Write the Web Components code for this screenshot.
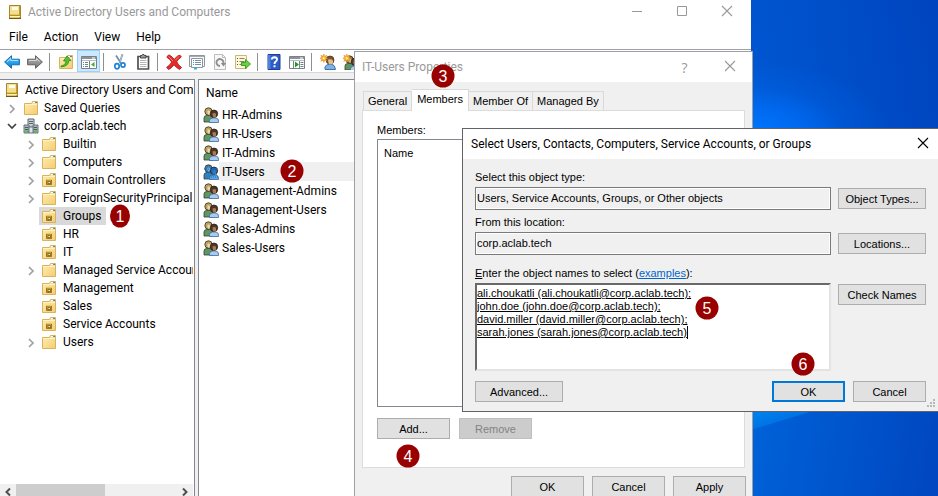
<!DOCTYPE html>
<html lang="en">
<head>
<meta charset="utf-8">
<title>Active Directory Users and Computers</title>
<style>
  html, body { margin: 0; height: 100%; overflow: hidden; }
  body { --ui: Roboto, "Open Sans", sans-serif; font-family: var(--ui); font-size: 12px; color: #000; }
</style>
</head>
<body>
<desk-top></desk-top>

<script>
const define = (name, html, setup) => customElements.define(name, class extends HTMLElement {
  constructor() {
    super();
    const t = document.createElement('template');
    t.innerHTML = html;
    this.attachShadow({ mode: 'open' }).append(t.content.cloneNode(true));
  }
  connectedCallback() { if (setup) setup(this, this.shadowRoot); }
});

/* ---------- icons ---------- */
const folder = `<path d="M1.500 3.500H8.500L9.500 1.500H14.500V14.500H1.500Z" fill="url(#f)" stroke="#d9b25c"/>
  <path d="M10 2.500h4" stroke="#fff"/><path d="M12 2.500h2" stroke="#3c8fd8"/><path d="M2 4.500h12" stroke="#fff3c4"/>`;
const grad = `<defs><linearGradient id="f" x1="0" y1="0" x2="1" y2="1"><stop offset="0" stop-color="#ffedb0"/><stop offset="1" stop-color="#f3cd72"/></linearGradient>
  <linearGradient id="b" x1="0" y1="0" x2="0" y2="1"><stop offset="0" stop-color="#7fd4fb"/><stop offset=".5" stop-color="#2ba4ec"/><stop offset="1" stop-color="#1273c4"/></linearGradient>
  <linearGradient id="g" x1="0" y1="0" x2="0" y2="1"><stop offset="0" stop-color="#b9b9b9"/><stop offset="1" stop-color="#747474"/></linearGradient></defs>`;
const people = (a, b, c) => `<path d="M1 15V11Q1 8.500 4 8.500H7Q10 9 10 12V15Z" fill="${c[0]}" stroke="#33402f" stroke-width=".8"/>
  <circle cx="5.500" cy="4.500" r="3.700" fill="${a}" stroke="#3a2e1e" stroke-width=".8"/><path d="M4.500 3.500Q6.500 3 7.500 4.500V7Q6 8.500 4.500 7Z" fill="${c[2]}"/>
  <path d="M6.500 15.500V13.500Q7 11 9.500 11H13Q15.500 11.500 15.500 14V15.500Z" fill="${c[1]}" stroke="#3b6aa0" stroke-width=".8"/>
  <circle cx="11" cy="6.700" r="3.700" fill="${b}" stroke="#2c211a" stroke-width=".8"/><path d="M9.500 6.500Q11.500 5.500 13 6.800V9.500Q11.500 11.300 9.800 9.500Z" fill="${c[3]}"/>`;
const star = `<path d="M4.500 0 5.400 2.600 8 1.500 6.900 4 9.500 5 6.900 6 8 8.500 5.400 7.500 4.500 10 3.600 7.500 1 8.500 2.100 6-.5 5 2.100 4 1 1.500 3.600 2.600Z" fill="#f9b52e" stroke="#d97b13" stroke-width=".5"/><circle cx="4.500" cy="5" r="1.300" fill="#fff3b0"/>`;
const ICONS = {
  book: `<path d="M2.500 1.500H13.500V14.500H2.500Z" fill="#e6c85c" stroke="#a8852a"/><path d="M3 2H12V10H3Z" fill="#f3df8c"/><path d="M5 3H11V6H5Z" fill="#fffdf0"/><path d="M12.500 2V14" stroke="#c09b35"/><path d="M3 11.500H13" stroke="#b7902c"/><path d="M3 12.500H13" stroke="#fff4bd"/><path d="M2 14.500H14" stroke="#6e5615"/>`,
  folder,
  ou: folder + `<path d="M5.500 7.500H10.500V12.500H5.500Z" fill="#c59a34" stroke="#9a7620"/><path d="M7 9.500H9.500V11.500H7Z" fill="#fff0ab" stroke="#6c5012" stroke-width=".7"/><path d="M5 7.500H11" stroke="#e6c668"/>`,
  domain: `<path d="M5 1H11V9H5Z" fill="#c8d0d4" stroke="#5a666c"/><path d="M6 3.500H10M6 5.500H10" stroke="#55636b"/><path d="M1 7H6V15H1Z" fill="#aab4b8" stroke="#68757b"/><path d="M10 7H15V15H10Z" fill="#aab4b8" stroke="#68757b"/><path d="M2 9.500H5M11 9.500H14M2 11.500H5M11 11.500H14" stroke="#4d5960"/><path d="M6 9H10V15H6Z" fill="#dfe5e8" stroke="#68757b"/><path d="M2 12.500H5V14.500H2ZM11 12.500H14V14.500H11Z" fill="#4fc546"/>`,
  group: people('#b9a25c', '#4c3426', ['#5e9664', '#a9cbee', '#f0d6a8', '#a97a54']),
  groupsel: `<g>${people('#4d7fae', '#22629f', ['#3a86c4', '#5fa4e2', '#83add3', '#3d7fb8'])}</g><path d="M2 3H9M1 5H14M2 7H14M3 9H13M1 11H14M2 13H15" stroke="#0a70c8" stroke-dasharray="1 1"/>`,
  back: `<path d="M.6 8 7.500 1.700V5.200H15.400V10.800H7.500V14.300Z" fill="url(#b)" stroke="#1a6db2"/><path d="M3 7.800 6.800 4.500V6.500H14" fill="none" stroke="#a5e2ff"/>`,
  forward: `<path d="M15.400 8 8.500 1.700V5.200H.6V10.800H8.500V14.300Z" fill="url(#g)" stroke="#616161"/><path d="M2 6.500H9.500V4.500L12.500 7.500" fill="none" stroke="#d5d5d5"/>`,
  up: `<g>${folder}</g><path d="M3 12Q8 11 8 7H5.500L9 2 13 6.500 10.700 6.800Q10.500 12.500 3 13Z" fill="#54c32d" stroke="#2d8b18" stroke-width=".8"/>`,
  console: `<path d="M.5 2.500H15.500V14.500H.5Z" fill="#fff" stroke="#7b7f86"/><path d="M1 3H15V5H1Z" fill="#8d939b"/><path d="M11 4H14" stroke="#fff"/><path d="M1 6.500H15" stroke="#b9bdc2"/><path d="M8.500 7V14" stroke="#7b7f86"/><path d="M2 8.500H7M2 10.500H7M2 12.500H7" stroke="#6e7f96" stroke-dasharray="1 1 3"/><path d="M13.500 8V13L10 10.500Z" fill="#35b32c"/>`,
  consoleplay: `<path d="M.5 2.500H15.500V14.500H.5Z" fill="#fff" stroke="#7b7f86"/><path d="M1 3H15V5H1Z" fill="#8d939b"/><path d="M11 4H14" stroke="#fff"/><path d="M1 6.500H15" stroke="#b9bdc2"/><path d="M4.500 7V14M10.500 7V14" stroke="#7b7f86"/><path d="M6 7.500V13.500L10 10.500Z" fill="#1d9c25"/><path d="M11.500 8.500H14.500M11.500 10.500H14.500M11.500 12.500H14.500" stroke="#6e7f96"/>`,
  cut: `<path d="M10.500 0 7.700 9M4 1.500 9.500 10" stroke="#7890a6" stroke-width="1.800"/><path d="M10.500 0 8 8" stroke="#c9d9e8" stroke-width=".7"/><ellipse cx="5" cy="12.300" rx="2.200" ry="2.600" fill="none" stroke="#1d84d8" stroke-width="1.700"/><ellipse cx="11" cy="11" rx="2" ry="2.200" fill="none" stroke="#1d84d8" stroke-width="1.700"/>`,
  clip: `<path d="M3 2.500H13.500V15H3Z" fill="#fff" stroke="#505050" stroke-width="1.700"/><path d="M5.500 1.500H7L7.500.5H9L9.500 1.500H11V4H5.500Z" fill="#9c9c9c" stroke="#454545"/><path d="M5 6.500H11.500M5 8.500H11.500M5 10.500H11.500M5 12.500H11.500" stroke="#b4b4b4"/>`,
  del: `<path d="M2.500 1Q4 .5 8.200 5.300 12 1 14 1.200L15.300 3Q12 5 10.700 7.800 12 11 15.500 13.500L13.500 15.500Q10 13.500 8 10.700 5.500 14.500 2.500 15.500L.7 13.300Q4.500 11 5.700 8 4 5 .8 3.200Z" fill="#e02b2b" stroke="#c32020"/><path d="M2.500 2.500 7 7M13 2.500 9.500 6" stroke="#f58a80"/>`,
  props: `<path d="M.5 1.500H15.500V12.500H.5Z" fill="#f8f9fa" stroke="#8f959c"/><path d="M1 2.500H15" stroke="#a5abb2"/><path d="M2.500 4.500H13.500V13.500H2.500Z" fill="#fff" stroke="#8f959c"/><path d="M6 6.500H12M6 8.500H12M6 10.500H12" stroke="#7c8da1"/><path d="M4 6.500H5M4 8.500H5M4 10.500H5" stroke="#1fa5e6"/><path d="M5 14.500H8" stroke="#25b4f3" stroke-width="2"/>`,
  refresh: `<path d="M2.500.5H10.500L13.500 3.500V15.500H2.500Z" fill="#f7f7f7" stroke="#bdbdbd"/><path d="M10.500.5V3.500H13.500" fill="none" stroke="#bdbdbd"/><path d="M8 12A3.500 3.500 0 1 1 11.300 9.500" fill="none" stroke="#8e8e8e" stroke-width="1.900"/><path d="M8.700 9H14L11.500 12.500Z" fill="#8e8e8e"/>`,
  exportlist: `<path d="M.5 1.500H11.500V14.500H.5Z" fill="#fff8d8" stroke="#c9b777"/><path d="M2 4.500H3M2 7.500H3M2 10.500H3" stroke="#55503d"/><path d="M4.500 4.500H9.500M4.500 7.500H9.500M4.500 10.500H8.500" stroke="#8c8468"/><path d="M6.500 8.500H10.500V5.500L15.500 10 10.500 14.500V11.500H6.500Z" fill="#6fd03d" stroke="#3e9c22"/>`,
  help: `<path d="M2 .5H14V15.500H2Z" fill="#2c5cc4" stroke="#1d3f95"/><path d="M2 1H4.500V15H2Z" fill="#4d80e4"/><path d="M5.800 5.500Q6 3.300 8.500 3.300 11 3.400 11 5.500 11 6.700 9.500 7.700 8.500 8.500 8.500 10" fill="none" stroke="#fff" stroke-width="1.900"/><path d="M7.500 11.300H9.500V13.200H7.500Z" fill="#fff"/>`,
  newuser: `<path d="M5 15.500V13Q6 10.500 9 10.300H12Q15 11 15.500 15.500Z" fill="#7fb2e4" stroke="#3d74ae"/><circle cx="10" cy="6" r="4" fill="#7a532f" stroke="#49311c" stroke-width=".7"/><path d="M8 5.500Q11 4.500 13 6.500V9Q11 11.500 8.500 9.500Z" fill="#e5bd8b"/><g transform="scale(.85)">${star}</g>`,
  newgroup: `<g transform="translate(1 1)">${people('#8a7a45', '#5c3a24', ['#5e9664', '#a9cbee', '#d8b98a', '#c99a6c'])}</g><g transform="scale(.85)">${star}</g>`,
  right: `<path d="M6 5 10 9 6 13" fill="none" stroke="#a0a0a0" stroke-width="1.700"/>`,
  down: `<path d="M4 6 8 10 12 6" fill="none" stroke="#404040" stroke-width="1.700"/>`,
  sleft: `<path d="M10 4.500 6.500 8 10 11.500" fill="none" stroke="#505050" stroke-width="2"/>`,
  sright: `<path d="M6 4.500 9.500 8 6 11.500" fill="none" stroke="#505050" stroke-width="2"/>`,
  min: `<path d="M3 7.500H13" stroke="currentColor"/>`,
  max: `<path d="M3.500 2.500H12.500V11.500H3.500Z" fill="none" stroke="currentColor"/>`,
  close: `<path d="M3 2 13 12M13 2 3 12" stroke="currentColor" stroke-width="1.100"/>`,
  grip: `<path d="M12 4h2v2h-2zM9 7h2v2H9zM12 7h2v2h-2zM6 10h2v2H6zM9 10h2v2H9zM12 10h2v2h-2z" fill="#b8b8b8"/>`
};
define('ad-icon', `<style>:host{display:block;flex:none;width:16px;height:16px}svg{display:block}</style>`, (h, r) => {
  const s = document.createElement('div');
  s.innerHTML = `<svg width="16" height="16" viewBox="0 0 16 16" fill="none" aria-hidden="true">${grad}${ICONS[h.getAttribute('name')]}</svg>`;
  r.append(s);
});

/* ---------- step badge ---------- */
define('step-badge', `<style>
  :host{display:flex;position:absolute;z-index:9;align-items:center;justify-content:center;width:23px;height:23px;border-radius:50%;background:#900;color:#fff;font:16px "Liberation Sans",sans-serif;transform:translate(-50%,-50%)}
  :host([small]){width:20px}
</style><slot></slot>`);

/* ---------- push button ---------- */
define('push-button', `<style>
  :host{display:block;width:73px}
  :host([wide]){width:88px}
  button{display:block;width:100%;height:21px;padding:0;border:1px solid #adadad;background:#e1e1e1;color:#000;font:inherit;white-space:nowrap}
  :host([primary]) button{border:2px solid #0078d7}
  button:disabled{background:#ccc;border-color:#bfbfbf;color:#838383}
</style><button type="button"><slot></slot></button>`, (h, r) => {
  r.querySelector('button').disabled = h.hasAttribute('disabled');
});

/* ---------- title bar ---------- */
define('title-bar', `<style>
  :host{display:flex;align-items:center;background:#fff;color:#999;height:30px;white-space:nowrap}
  .t{flex:1;display:flex;align-items:center;gap:5px}
  .c{display:flex}
  button{display:grid;place-items:center;width:45px;height:24px;padding:0;border:0;background:none;color:inherit;font:14px "Open Sans",sans-serif}
</style><div class="t"><slot></slot></div><div class="c"></div>`, (h, r) => {
  r.querySelector('.c').innerHTML = h.getAttribute('controls').split(' ').map(n =>
    `<button type="button" aria-label="${n}">${n === 'help' ? '?' : `<ad-icon name="${n}"></ad-icon>`}</button>`).join('');
});

/* ---------- tool bar ---------- */
define('tool-bar', `<style>
  :host{display:flex;height:22px;background:#fff;border-top:1px solid #a0a0a8;border-bottom:1px solid #d8d8d8}
  button{display:grid;place-items:center;flex:none;width:23px;height:22px;padding:2px 0 0;border:0;background:none}
  button.on{background:#cce8ff;box-shadow:inset 0 0 0 1px #99d1ff}
  i{flex:none;width:1px;margin:3px 4px 1px 3px;background:#8f8f8f}
</style>`, (h, r) => {
  const items = ['back', 'forward', '', 'up', 'console', '', 'cut', 'clip', '', 'del', 'props', 'refresh', 'exportlist', '', 'help', 'consoleplay', '', 'newuser', 'newgroup'];
  const d = document.createElement('template');
  d.innerHTML = items.map(n => n ? `<button type="button" aria-label="${n}" class="${n === 'console' ? 'on' : ''}"><ad-icon name="${n}"></ad-icon></button>` : '<i></i>').join('');
  r.append(d.content);
});

/* ---------- tree ---------- */
define('tree-item', `<style>
  :host{display:flex;align-items:center;height:18px;white-space:nowrap}
  .a{flex:none;width:16px;height:16px}
  .n{display:flex;align-items:center;height:18px;padding:0 4px 0 1px;gap:5px}
  :host([level="1"]){padding-left:4px}
  :host([level="2"]){padding-left:23px}
  :host([level="0"]) .a{display:none}
  :host([level="0"]) .n{padding-left:4px}
  :host([level="1"]) .n{padding-left:3px}
  :host([level="2"]) .n{padding-left:2px;gap:6px}
  :host([selected]) .n{background:#d9d9d9}
</style><div class="a"></div><div class="n"><slot></slot></div>`, (h, r) => {
  const st = h.getAttribute('arrow');
  if (st) r.querySelector('.a').innerHTML = `<ad-icon name="${st}"></ad-icon>`;
  r.querySelector('.n').insertAdjacentHTML('afterbegin', `<ad-icon name="${h.getAttribute('icon')}"></ad-icon>`);
});
define('scroll-bar', `<style>
  :host{display:flex;height:12px;overflow:hidden;margin-right:1px;background:#f0f0f0;align-items:flex-start}
  .track{flex:1;align-self:stretch}.thumb{width:55%;height:100%;background:#cdcdcd}
</style><ad-icon name="sleft"></ad-icon><div class="track"><div class="thumb"></div></div><ad-icon name="sright"></ad-icon>`);
define('tree-view', `<style>
  :host{display:flex;flex-direction:column;box-sizing:border-box;flex:0 0 195px;min-width:0;background:#fff;border-top:1px solid #828790;border-right:1px solid #828790}
  .rows{flex:1;min-height:0;padding-top:1px;margin-right:1px;overflow:hidden}
</style><div class="rows">
  <tree-item level="0" icon="book">Active Directory Users and Com</tree-item>
  <tree-item level="1" arrow="right" icon="folder">Saved Queries</tree-item>
  <tree-item level="1" arrow="down" icon="domain">corp.aclab.tech</tree-item>
  <tree-item level="2" arrow="right" icon="folder">Builtin</tree-item>
  <tree-item level="2" arrow="right" icon="folder">Computers</tree-item>
  <tree-item level="2" arrow="right" icon="ou">Domain Controllers</tree-item>
  <tree-item level="2" arrow="right" icon="folder">ForeignSecurityPrincipals</tree-item>
  <tree-item level="2" icon="ou" selected>Groups</tree-item>
  <tree-item level="2" icon="ou">HR</tree-item>
  <tree-item level="2" icon="ou">IT</tree-item>
  <tree-item level="2" arrow="right" icon="folder">Managed Service Accounts</tree-item>
  <tree-item level="2" icon="ou">Management</tree-item>
  <tree-item level="2" icon="ou">Sales</tree-item>
  <tree-item level="2" icon="ou">Service Accounts</tree-item>
  <tree-item level="2" arrow="right" icon="folder">Users</tree-item>
</div><scroll-bar></scroll-bar>`);

/* ---------- object list ---------- */
define('object-list', `<style>
  :host{display:block;flex:1;min-width:0;background:#fff;border:solid #828790;border-width:1px 0 0 1px;margin-left:3px;padding-left:4px}
  table{border-collapse:collapse;width:100%}
  th{font-weight:400;text-align:left;padding:0 3px;height:25px}
  td{padding:0;height:19px}
  .r{display:flex;align-items:center}
  .r span{flex:1;box-sizing:border-box;height:19px;line-height:18px;padding:1px 0 0 3px}
  .sel span{background:#f0f0f0}
</style><table><thead><tr><th>Name</th></tr></thead><tbody></tbody></table>`, (h, r) => {
  r.querySelector('tbody').innerHTML = ['HR-Admins', 'HR-Users', 'IT-Admins', 'IT-Users', 'Management-Admins', 'Management-Users', 'Sales-Admins', 'Sales-Users'].map(n =>
    `<tr><td><div class="r ${n === 'IT-Users' ? 'sel' : ''}"><ad-icon name="${n === 'IT-Users' ? 'groupsel' : 'group'}"></ad-icon><span>${n}</span></div></td></tr>`).join('');
});

/* ---------- main console window ---------- */
define('console-window', `<style>
  :host{display:flex;flex-direction:column;background:#fff}
  title-bar{height:24px;padding:0 2px 0 7px}
  nav{display:flex;height:25px;align-items:center;padding-left:1px}
  nav button{border:0;background:none;font:inherit;padding:0 8px;color:#000}
  main{display:flex;flex:1;min-height:0;padding-top:6px;background:#f0f0f0}
</style>
<title-bar controls="min max close"><ad-icon name="book"></ad-icon><span>Active Directory Users and Computers</span></title-bar>
<nav><button type="button">File</button><button type="button">Action</button><button type="button">View</button><button type="button">Help</button></nav>
<tool-bar></tool-bar>
<main><tree-view></tree-view><object-list></object-list></main>`);

/* ---------- group properties ---------- */
define('properties-window', `<style>
  :host{display:flex;flex-direction:column;box-sizing:border-box;background:#f0f0f0;border:1px solid #a0a0a4;font:11px "Liberation Sans",sans-serif}
  title-bar{font:12px var(--ui);padding-left:7px}
  .tabs{display:flex;align-items:flex-end;padding:7px 8px 0}
  .tabs button{height:19px;padding:0 4px;border:1px solid #d9d9d9;border-width:1px 1px 0 0;background:#f0f0f0;font:inherit;white-space:nowrap;color:#000}
  .tabs button:first-child{border-left-width:1px}
  .tabs button[aria-selected=true]{height:22px;margin-bottom:-1px;padding:0 5px 3px;background:#fff;z-index:1}
  .panel{margin:0 7px;border:1px solid #dcdcdc;background:#fff;padding:12px 14px 28px}
  h4{margin:0;font:inherit;line-height:14px}
  .box{box-sizing:border-box;height:268px;margin-top:2px;border:1px solid #828790;padding:6px;line-height:14px}
  .row{display:flex;gap:9px;padding-top:11px}
  .foot{display:flex;justify-content:flex-end;gap:8px;padding:8px 6px}
</style>
<title-bar controls="help close">IT-Users Properties</title-bar>
<div class="tabs" role="tablist"><button role="tab">General</button><button role="tab" aria-selected="true">Members</button><button role="tab">Member Of</button><button role="tab">Managed By</button></div>
<div class="panel"><h4>Members:</h4><div class="box">Name</div>
<div class="row"><push-button>Add...</push-button><push-button disabled>Remove</push-button></div></div>
<div class="foot"><push-button>OK</push-button><push-button>Cancel</push-button><push-button>Apply</push-button></div>`);

/* ---------- object picker ---------- */
define('picker-window', `<style>
  :host{display:block;box-sizing:border-box;background:#f0f0f0;border:1px solid #606468;font:11px "Liberation Sans",sans-serif}
  title-bar{font:12px var(--ui);color:#000;padding-left:8px}
  .grid{display:grid;grid-template-columns:1fr 88px;column-gap:7px;padding:10px 19px 0 12px}
  label{grid-column:1/3;line-height:16px}
  label+input,label+.names{margin-top:2px}
  input{box-sizing:border-box;width:100%;min-width:0;height:23px;margin-bottom:4px;border:1px solid #7a7a7a;box-shadow:inset -1px -1px #fff,inset 1px 1px #fff;background:#f0f0f0;padding:0 1px 2px;font:inherit;color:#000}
  push-button{margin-top:3px}
  .gap{margin-top:6px}
  .names{position:relative}
  textarea{display:block;box-sizing:border-box;width:100%;height:88px;padding:2px 0;border:2px solid;border-color:#696969 #e3e3e3 #e3e3e3 #696969;background:#fff;font:inherit;line-height:13px;color:#000;resize:none;overflow:hidden;text-decoration:underline;white-space:pre}
  .caret{position:absolute;left:212px;top:43px;width:1px;height:13px;background:#000}
  a{color:#06c}
  .foot{display:flex;gap:8px;padding:10px 19px 9px 12px}
  .foot push-button{margin:0}
  .foot push-button[wide]{margin-right:auto}
  ad-icon{position:absolute;right:8px;bottom:0}
</style>
<title-bar controls="close">Select Users, Contacts, Computers, Service Accounts, or Groups</title-bar>
<div class="grid">
  <label for="t">Select this object type:</label>
  <input id="t" readonly value="Users, Service Accounts, Groups, or Other objects"><push-button wide>Object Types...</push-button>
  <label for="l">From this location:</label>
  <input id="l" readonly value="corp.aclab.tech"><push-button wide>Locations...</push-button>
  <label for="n" class="gap"><u>E</u>nter the object names to select (<a href="#examples">examples</a>):</label>
  <div class="names"><textarea id="n" spellcheck="false">ali.choukatli (ali.choukatli@corp.aclab.tech);
john.doe (john.doe@corp.aclab.tech);
david.miller (david.miller@corp.aclab.tech);
sarah.jones (sarah.jones@corp.aclab.tech)</textarea><div class="caret"></div></div><push-button wide>Check Names</push-button>
</div>
<div class="foot"><push-button wide>Advanced...</push-button><push-button primary>OK</push-button><push-button>Cancel</push-button></div>
<ad-icon name="grip"></ad-icon>`);

/* ---------- desktop ---------- */
define('desk-top', `<style>
  :host{display:block;position:relative;height:100%;overflow:hidden;
    background:radial-gradient(140px 75px at 752px 135px,#0078ff,rgba(0,112,250,.75) 35%,rgba(0,104,236,.3) 65%,rgba(0,96,216,0)),linear-gradient(80deg,#005cd6 751px,#0044bf)}
  .low{position:absolute;left:753px;right:0;top:411px;bottom:0;background:linear-gradient(163deg,#0080ec 4px,#0074e4 17px,transparent 18px),linear-gradient(100deg,#0062d8,#0046c0)}
  console-window{position:absolute;left:0;right:187px;top:0;bottom:0}
  properties-window{position:absolute;left:354px;right:185px;top:51px}
  picker-window{position:absolute;left:462px;right:-8px;top:128px}
</style>
<div class="low"></div>
<console-window></console-window>
<properties-window></properties-window>
<picker-window></picker-window>
<step-badge small style="left:120px;top:216px">1</step-badge>
<step-badge style="left:292px;top:171px">2</step-badge>
<step-badge style="left:443px;top:76px">3</step-badge>
<step-badge style="left:408px;top:456px">4</step-badge>
<step-badge style="left:707px;top:308px">5</step-badge>
<step-badge style="left:803px;top:364px">6</step-badge>`);
</script>
</body>
</html>
